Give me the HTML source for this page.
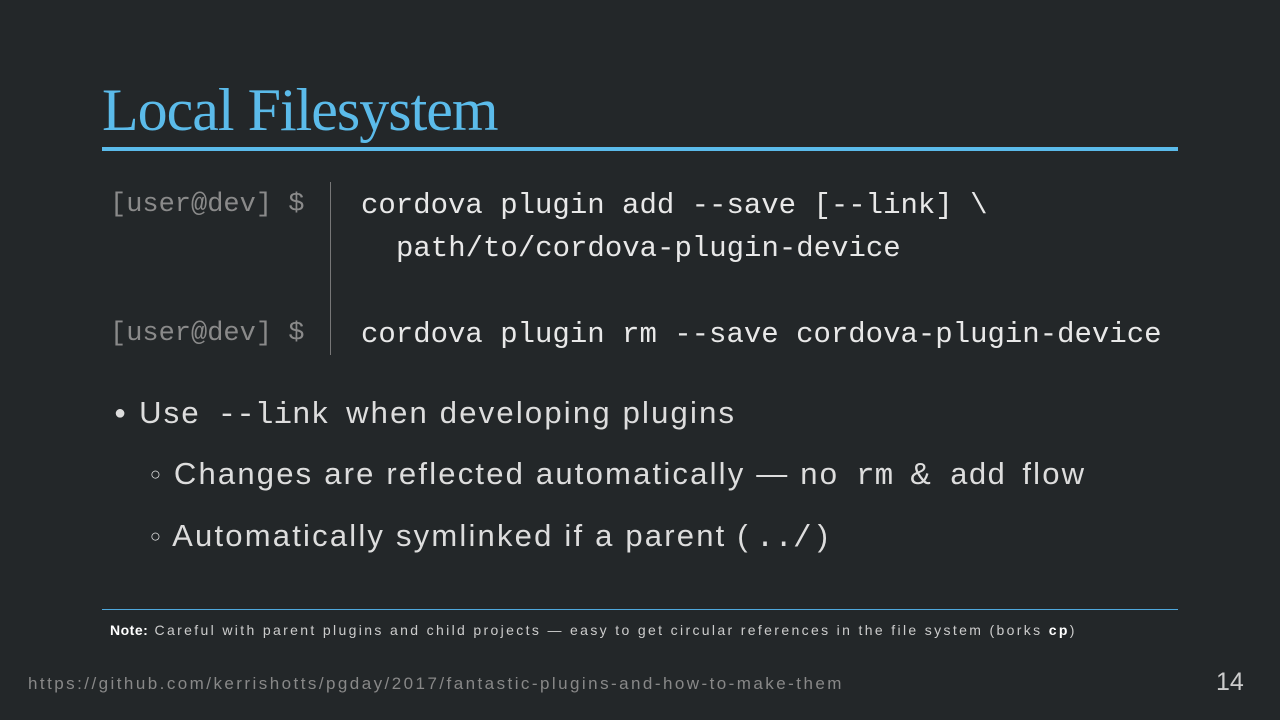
<!DOCTYPE html><html><head><style>
body{margin:0;width:1280px;height:720px;background:#232729;position:relative;overflow:hidden;font-family:"Liberation Sans",sans-serif;color:#ddd}
.a{position:absolute;white-space:pre}
.m{font-family:"Liberation Mono",monospace;letter-spacing:0}
.b{font-size:31px;letter-spacing:2.2px}
.b .m{margin:0 6px}
</style></head><body>
<div class="a" style="left:102px;top:76px;font-family:'Liberation Serif',serif;font-size:60px;color:#5bbbea;letter-spacing:-1px">Local Filesystem</div>
<div class="a" style="left:102px;top:147px;width:1076px;height:4px;background:#5bbbea"></div>
<div class="a m" style="left:110px;top:190px;font-size:27px;color:#8a8a8a">[user@dev] $</div>
<div class="a m" style="left:110px;top:319px;font-size:27px;color:#8a8a8a">[user@dev] $</div>
<div class="a" style="left:330px;top:182px;width:1px;height:173px;background:#777"></div>
<div class="a m" style="left:361px;top:189px;font-size:29px;color:#e8e8e8">cordova plugin add --save [--link] \</div>
<div class="a m" style="left:396px;top:232px;font-size:29px;color:#e8e8e8">path/to/cordova-plugin-device</div>
<div class="a m" style="left:361px;top:318px;font-size:29px;color:#e8e8e8">cordova plugin rm --save cordova-plugin-device</div>
<div class="a b" style="left:114px;top:395px"><span style="font-size:20px;position:relative;top:-4px">●</span> Use <span class="m">--link</span> when developing plugins</div>
<div class="a b" style="left:150px;top:456px"><span style="font-size:18px;position:relative;top:-4px">○</span> Changes are reflected automatically — no <span class="m">rm</span> &amp; <span class="m">add</span> flow</div>
<div class="a b" style="left:150px;top:518px"><span style="font-size:18px;position:relative;top:-4px">○</span> Automatically symlinked if a parent (<span class="m">../</span>)</div>
<div class="a" style="left:102px;top:609px;width:1076px;height:1px;background:#4fa8dc"></div>
<div class="a" style="left:110px;top:622px;font-size:14px;color:#ccc;letter-spacing:2.35px"><b style="color:#fff;letter-spacing:0.5px">Note:</b> Careful with parent plugins and child projects — easy to get circular references in the file system (borks <b style="color:#fff">cp</b>)</div>
<div class="a" style="left:28px;top:674px;font-size:17px;color:#888;letter-spacing:2.45px">https://github.com/kerrishotts/pgday/2017/fantastic-plugins-and-how-to-make-them</div>
<div class="a" style="left:1216px;top:668px;font-size:25px;color:#ccc">14</div>
</body></html>
